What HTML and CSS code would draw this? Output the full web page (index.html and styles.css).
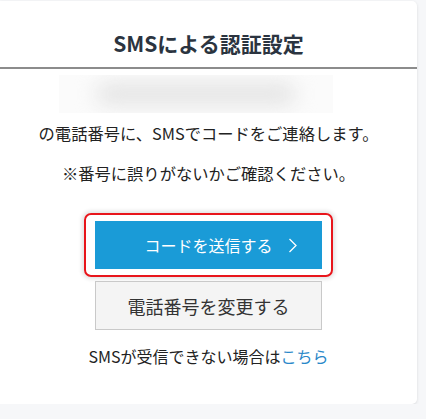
FILE: index.html
```html
<!DOCTYPE html>
<html lang="ja">
<head>
    <meta charset="UTF-8">
    <meta name="viewport" content="width=device-width, initial-scale=1.0">
    <title>SMSによる認証設定</title>
    <link rel="stylesheet" href="styles.css">
</head>
<body>
    <div class="card">
        <div class="card-head">
            <h1 class="title">SMSによる認証設定</h1>
        </div>
        <div class="card-body">
            <div class="masked">
                <div class="masked-blob"></div>
            </div>
            <p class="msg">の電話番号に、SMSでコードをご連絡します。</p>
            <p class="msg msg-note">※番号に誤りがないかご確認ください。</p>

            <div class="highlight">
                <button type="button" class="btn btn-send">
                    コードを送信する
                    <svg class="chev" width="10" height="15" viewBox="0 0 10 15">
                        <path d="M1.5 1 L8 7.5 L1.5 14" fill="none" stroke="#fff" stroke-width="1.3"/>
                    </svg>
                </button>
            </div>

            <button type="button" class="btn btn-change">電話番号を変更する</button>

            <p class="help">SMSが受信できない場合は<a href="#" class="link">こちら</a></p>
        </div>
    </div>
</body>
</html>
```

FILE: styles.css
```css
body {
    margin: 0;
    padding: 0;
    background-color: #f6f7f9;
    color: #222;
    font-family: 'Noto Sans CJK JP', 'Noto Sans', sans-serif;
}

.card {
    width: 417px;
    margin-top: 1px;
    background-color: #fff;
    border-radius: 0 5px 5px 0;
    box-shadow: 0 1px 3px rgba(0, 0, 0, 0.12);
}

.card-head {
    padding: 28px 0 10px;
    border-bottom: 2px solid #8c8c8c;
    text-align: center;
}

.title {
    margin: 0;
    font-size: 21px;
    line-height: 28px;
    font-weight: bold;
    color: #2b3440;
}

.card-body {
    display: flex;
    flex-direction: column;
    align-items: center;
    padding: 6px 0 36px;
}

.masked {
    width: 274px;
    height: 38px;
    margin-left: -26px;
    display: flex;
    align-items: center;
    justify-content: center;
    overflow: hidden;
    background-color: #fbfbfb;
}

.masked-blob {
    width: 200px;
    height: 22px;
    border-radius: 11px;
    background-color: #e4e4e4;
    filter: blur(10px);
}

.msg {
    margin: 8px 0 0;
    font-size: 16.3px;
    line-height: 24px;
}

.msg-note {
    margin-top: 16px;
}

.highlight {
    margin-top: 28px;
    padding: 6px 9px;
    border: 2px solid #e8151b;
    border-radius: 7px;
    box-shadow: 0 0 4px 2px rgba(0, 0, 0, 0.12);
}

.btn {
    display: flex;
    align-items: center;
    justify-content: center;
    width: 227px;
    font-family: inherit;
    cursor: pointer;
}

.btn-send {
    position: relative;
    height: 48px;
    border: none;
    background-color: #1a9bd7;
    color: #fff;
    font-size: 16px;
}

.chev {
    position: absolute;
    right: 24px;
    top: 17px;
}

.btn-change {
    margin-top: 4px;
    height: 49px;
    border: 1px solid #c9c9c9;
    background-color: #f4f4f4;
    color: #333;
    font-size: 18px;
}

.help {
    margin: 14px 0 0;
    font-size: 16px;
    line-height: 24px;
}

.link {
    color: #2a88c9;
    text-decoration: none;
}
```
